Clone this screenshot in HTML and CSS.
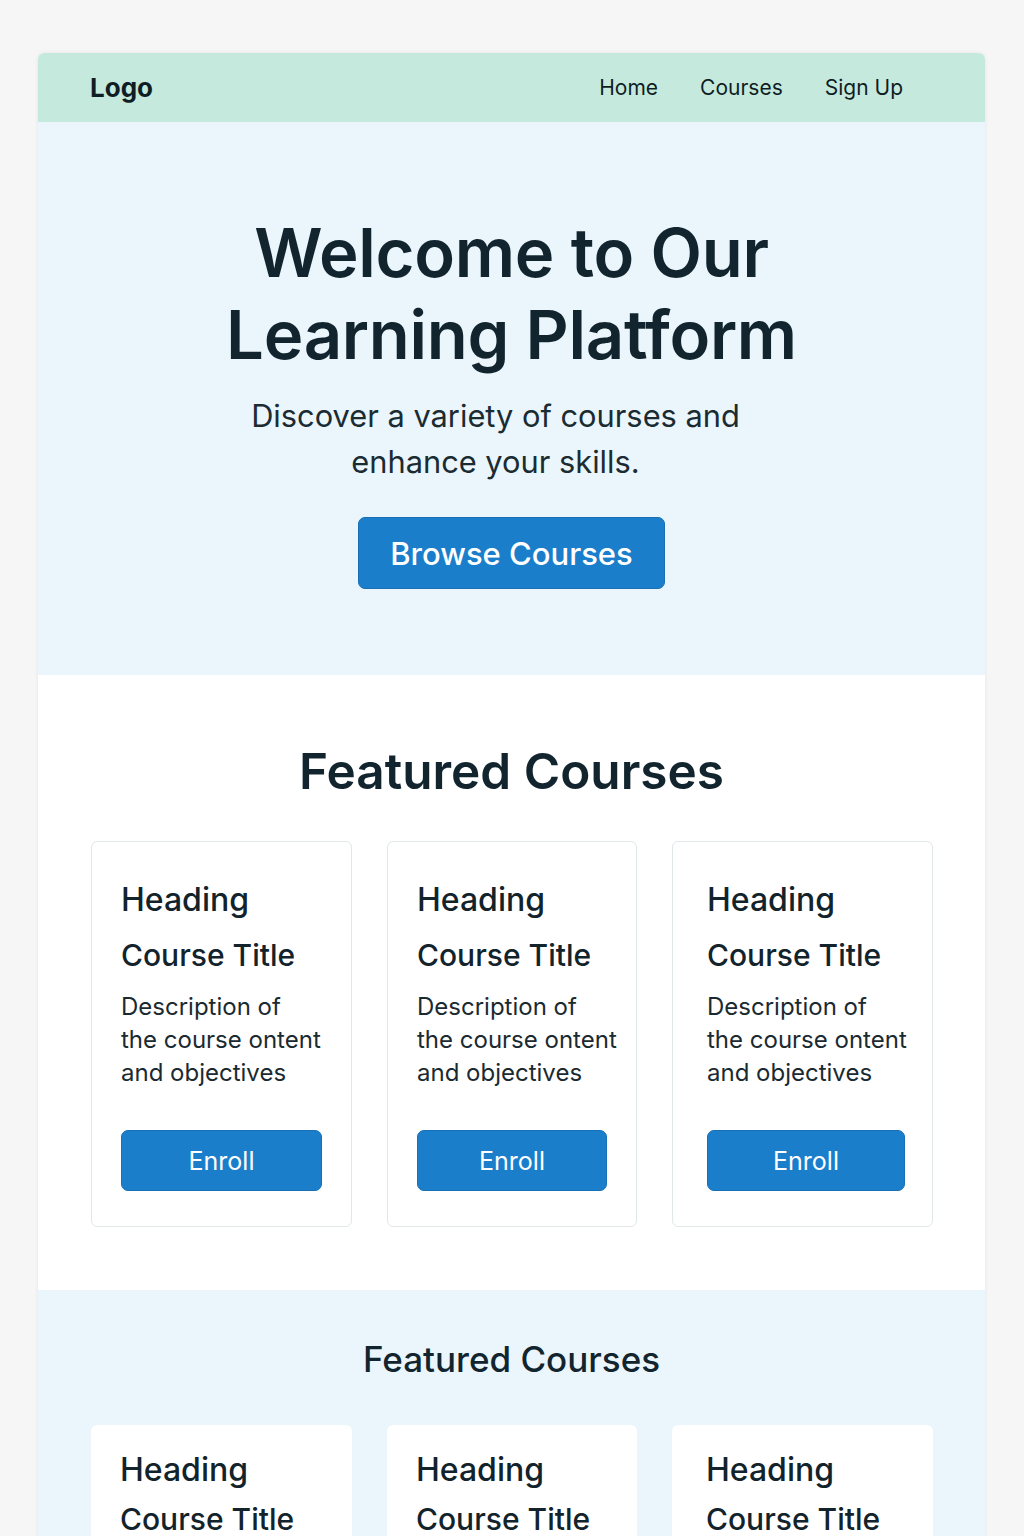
FILE: index.html
```html
<!DOCTYPE html>
<html lang="en">
<head>
<meta charset="utf-8">
<title>Learning Platform</title>
<link rel="stylesheet" href="styles.css">
</head>
<body>
<div class="page">
  <header class="topbar">
    <div class="logo">Logo</div>
    <nav class="nav">
      <a href="#">Home</a>
      <a href="#">Courses</a>
      <a href="#">Sign Up</a>
    </nav>
  </header>

  <section class="hero">
    <h1 class="hero-title">Welcome to Our<br>Learning Platform</h1>
    <p class="hero-sub">Discover a variety of courses and<br>enhance your skills.</p>
    <a class="btn btn-hero" href="#">Browse Courses</a>
  </section>

  <section class="featured">
    <h2 class="section-title">Featured Courses</h2>
    <div class="cards">
      <div class="card">
        <h3 class="card-heading">Heading</h3>
        <h4 class="card-title">Course Title</h4>
        <p class="card-desc">Description of<br>the course ontent<br>and objectives</p>
        <a class="btn btn-enroll" href="#">Enroll</a>
      </div>
      <div class="card">
        <h3 class="card-heading">Heading</h3>
        <h4 class="card-title">Course Title</h4>
        <p class="card-desc">Description of<br>the course ontent<br>and objectives</p>
        <a class="btn btn-enroll" href="#">Enroll</a>
      </div>
      <div class="card card-wide-pad">
        <h3 class="card-heading">Heading</h3>
        <h4 class="card-title">Course Title</h4>
        <p class="card-desc">Description of<br>the course ontent<br>and objectives</p>
        <a class="btn btn-enroll" href="#">Enroll</a>
      </div>
    </div>
  </section>

  <section class="featured featured-alt">
    <h2 class="section-title section-title-sm">Featured Courses</h2>
    <div class="cards">
      <div class="card card-plain">
        <h3 class="card-heading">Heading</h3>
        <h4 class="card-title">Course Title</h4>
      </div>
      <div class="card card-plain">
        <h3 class="card-heading">Heading</h3>
        <h4 class="card-title">Course Title</h4>
      </div>
      <div class="card card-plain card-wide-pad">
        <h3 class="card-heading">Heading</h3>
        <h4 class="card-title">Course Title</h4>
      </div>
    </div>
  </section>
</div>
</body>
</html>
```

FILE: styles.css
```css
* { box-sizing: border-box; }

html, body {
  margin: 0;
  padding: 0;
}

body {
  background: #f6f6f6;
  font-family: Inter, "Noto Sans", "Liberation Sans", sans-serif;
  color: #11242c;
  height: 1536px;
  overflow: hidden;
}

.page {
  width: 947px;
  margin: 53px 0 0 38px;
  border-radius: 6px 6px 0 0;
  box-shadow: 0 0 4px rgba(0, 0, 0, 0.07);
  overflow: hidden;
  background: #ffffff;
}

.topbar {
  height: 69px;
  background: #c5eadd;
  display: flex;
  align-items: center;
  justify-content: space-between;
  padding: 0 82px 0 52px;
}

.logo {
  font-size: 26px;
  font-weight: 700;
  color: #0f1e24;
}

.nav {
  display: flex;
  gap: 42px;
}

.nav a {
  font-size: 21px;
  color: #0f1e24;
  text-decoration: none;
}

.hero {
  background: #eaf6fc;
  padding: 90px 0 86px;
  display: flex;
  flex-direction: column;
  align-items: center;
  text-align: center;
}

.hero-title {
  margin: 0;
  font-size: 67px;
  line-height: 82px;
  font-weight: 600;
  letter-spacing: -0.3px;
  color: #12252e;
}

.hero-sub {
  margin: 17px 0 0;
  padding-right: 32px;
  font-size: 30.8px;
  line-height: 46px;
  font-weight: 400;
  color: #1b2b32;
}

.btn {
  display: flex;
  align-items: center;
  justify-content: center;
  background: #1a7ecb;
  color: #ffffff;
  text-decoration: none;
  border-radius: 7px;
  border: 1px solid #176fb5;
}

.btn-hero {
  margin-top: 32px;
  width: 307px;
  height: 72px;
  font-size: 31px;
  font-weight: 500;
}

.featured {
  padding: 66px 53px 63px;
  background: #ffffff;
}

.section-title {
  margin: 0;
  text-align: center;
  font-size: 49.5px;
  line-height: 60px;
  font-weight: 600;
  color: #12252e;
}

.cards {
  margin-top: 40px;
  display: grid;
  grid-template-columns: 261px 250px 261px;
  gap: 35px;
}

.card {
  background: #ffffff;
  border: 1px solid #e2e7e9;
  border-radius: 6px;
  padding: 38px 29px 35px;
}

.card-wide-pad {
  padding-left: 34px;
  padding-right: 27px;
}

.card-heading {
  margin: 0;
  font-size: 32px;
  line-height: 40px;
  font-weight: 500;
  color: #12232b;
}

.card-title {
  margin: 16px 0 0;
  font-size: 30px;
  line-height: 38px;
  font-weight: 500;
  color: #12232b;
}

.card-desc {
  margin: 16px 0 0;
  font-size: 24px;
  line-height: 33px;
  font-weight: 400;
  color: #1b2a31;
  white-space: nowrap;
}

.btn-enroll {
  margin-top: 41px;
  width: 100%;
  height: 61px;
  font-size: 25px;
  font-weight: 400;
}

.featured-alt {
  background: #eaf6fc;
  padding-top: 48px;
}

.section-title-sm {
  font-size: 35px;
  line-height: 42px;
  font-weight: 500;
}

.featured-alt .cards {
  margin-top: 45px;
}

.card-plain {
  border: none;
  padding-top: 25px;
}

.card-plain .card-title {
  margin-top: 10px;
}
```
